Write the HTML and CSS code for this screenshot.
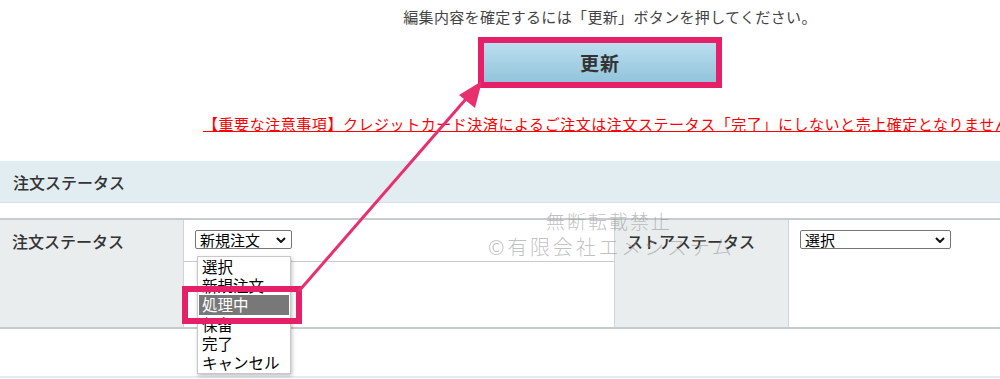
FILE: index.html
```html
<!DOCTYPE html>
<html lang="ja">
<head>
<meta charset="utf-8">
<link rel="stylesheet" href="styles.css">
</head>
<body>
<div class="page">
  <p class="notice">編集内容を確定するには「更新」ボタンを押してください。</p>
  <div class="btn-row">
    <div class="btn-frame"><button class="btn">更新</button></div>
  </div>
  <p class="warning"><a href="#">【重要な注意事項】クレジットカード決済によるご注文は注文ステータス「完了」にしないと売上確定となりません。</a></p>

  <div class="section-head">注文ステータス</div>

  <div class="status-table">
    <div class="cell label">注文ステータス</div>
    <div class="cell value">
      <div class="fake-select narrow"><span>新規注文</span><svg class="chev" viewBox="0 0 10 6" width="10" height="6"><path d="M1 1 L5 5 L9 1" fill="none" stroke="#111" stroke-width="2"/></svg></div>
      <div class="inner-box"></div>
    </div>
    <div class="cell label">ストアステータス</div>
    <div class="cell value">
      <div class="fake-select wide"><span>選択</span><svg class="chev" viewBox="0 0 10 6" width="10" height="6"><path d="M1 1 L5 5 L9 1" fill="none" stroke="#111" stroke-width="2"/></svg></div>
    </div>
  </div>

  <div class="bottom-line"></div>

  <!-- overlays -->
  <ul class="dropdown">
    <li>選択</li>
    <li>新規注文</li>
    <li class="active">処理中</li>
    <li>保留</li>
    <li>完了</li>
    <li>キャンセル</li>
  </ul>
  <div class="watermark">
    <div class="wm1">無断転載禁止</div>
    <div class="wm2">©有限会社エメシステム</div>
  </div>
  <div class="highlight"></div>
  <svg class="arrow" width="1000" height="379" viewBox="0 0 1000 379">
    <line x1="299" y1="291" x2="472" y2="92" stroke="#e8306f" stroke-width="3"/>
    <polygon points="482,81 459,95 475,108" fill="#e8306f"/>
  </svg>
</div>
</body>
</html>
```

FILE: styles.css
```css
* { box-sizing: border-box; }
html, body {
  margin: 0;
  padding: 0;
  background: #fff;
}
body {
  width: 1000px;
  height: 379px;
  overflow: hidden;
  font-family: "Noto Sans CJK JP", "Noto Sans", sans-serif;
  color: #333;
}
.page {
  position: relative;
  width: 1000px;
  height: 379px;
}
.notice {
  margin: 0;
  padding-top: 7px;
  padding-left: 220px;
  font-size: 15px;
  line-height: 20px;
  letter-spacing: 0.35px;
  color: #444;
  text-align: center;
}
.btn-row {
  display: flex;
  justify-content: flex-start;
  padding-left: 478px;
  margin-top: 10px;
}
.btn-frame {
  width: 244px;
  height: 51px;
  border: 6px solid #e61f69;
}
.btn {
  display: block;
  width: 100%;
  height: 100%;
  border: none;
  margin: 0;
  padding: 0;
  background: linear-gradient(#bbdef0, #92c4da);
  font-family: "Noto Sans CJK JP", sans-serif;
  font-size: 19px;
  font-weight: 700;
  color: #333;
  letter-spacing: 1px;
}
.warning {
  margin: 26px 0 0 0;
  padding-left: 203px;
  white-space: nowrap;
  overflow: hidden;
  font-size: 15px;
  line-height: 19px;
  letter-spacing: 0.55px;
}
.warning a {
  color: #ff0000;
  text-decoration: underline;
}
.section-head {
  margin-top: 28px;
  height: 42px;
  background: #e2edf2;
  border-bottom: 1px solid #d3e3ea;
  padding-left: 13px;
  font-size: 16px;
  font-weight: 500;
  line-height: 42px;
  color: #333;
}
.status-table {
  margin-top: 15px;
  display: grid;
  grid-template-columns: 184px 431px 174px 211px;
  height: 111px;
  border-top: 2px solid #c8cbcb;
  border-bottom: 2px solid #c8cbcb;
}
.cell {
  border-right: 1px solid #d0d4d4;
}
.cell:last-child { border-right: none; }
.label {
  background: #e9edee;
  padding: 10px 0 0 12px;
  font-size: 16px;
  font-weight: 500;
  line-height: 22px;
  color: #333;
}
.value {
  padding: 10px 0 0 11px;
}
.fake-select {
  display: flex;
  align-items: center;
  justify-content: space-between;
  height: 19px;
  border: 1px solid #767676;
  border-radius: 2px;
  padding: 0 5px 0 4px;
  font-size: 15px;
  line-height: 17px;
  color: #000;
  background: #fff;
}
.narrow { width: 97px; }
.wide { width: 151px; }
.inner-box {
  margin-top: 12px;
  border-top: 1px solid #c9cccc;
  margin-left: -11px;
}
.bottom-line {
  margin-top: 47px;
  height: 2px;
  background: #e1edf2;
}
.dropdown {
  position: absolute;
  left: 197px;
  top: 256px;
  width: 94px;
  height: 118px;
  margin: 0;
  padding: 0 1px 0 1px;
  list-style: none;
  background: #fff;
  border: 1px solid #c8c8c8;
  box-shadow: 1px 2px 4px rgba(0,0,0,0.25);
  font-size: 15.5px;
  color: #000;
}
.dropdown li {
  height: 19px;
  line-height: 18px;
  padding-left: 3px;
  white-space: nowrap;
}
.dropdown li.active {
  background: #787878;
  color: #fff;
  height: 20px;
}
.watermark {
  position: absolute;
  left: 488px;
  top: 208px;
  color: rgba(140,140,140,0.55);
  font-weight: 300;
  pointer-events: none;
}
.wm1 {
  padding-left: 58px;
  font-size: 19px;
  line-height: 26px;
  letter-spacing: 2px;
}
.wm2 {
  font-size: 20px;
  line-height: 26px;
  letter-spacing: 2.8px;
}
.highlight {
  position: absolute;
  left: 182px;
  top: 286px;
  width: 120px;
  height: 38px;
  border: 6px solid #e61f69;
}
.arrow {
  position: absolute;
  left: 0;
  top: 0;
  pointer-events: none;
}
```
